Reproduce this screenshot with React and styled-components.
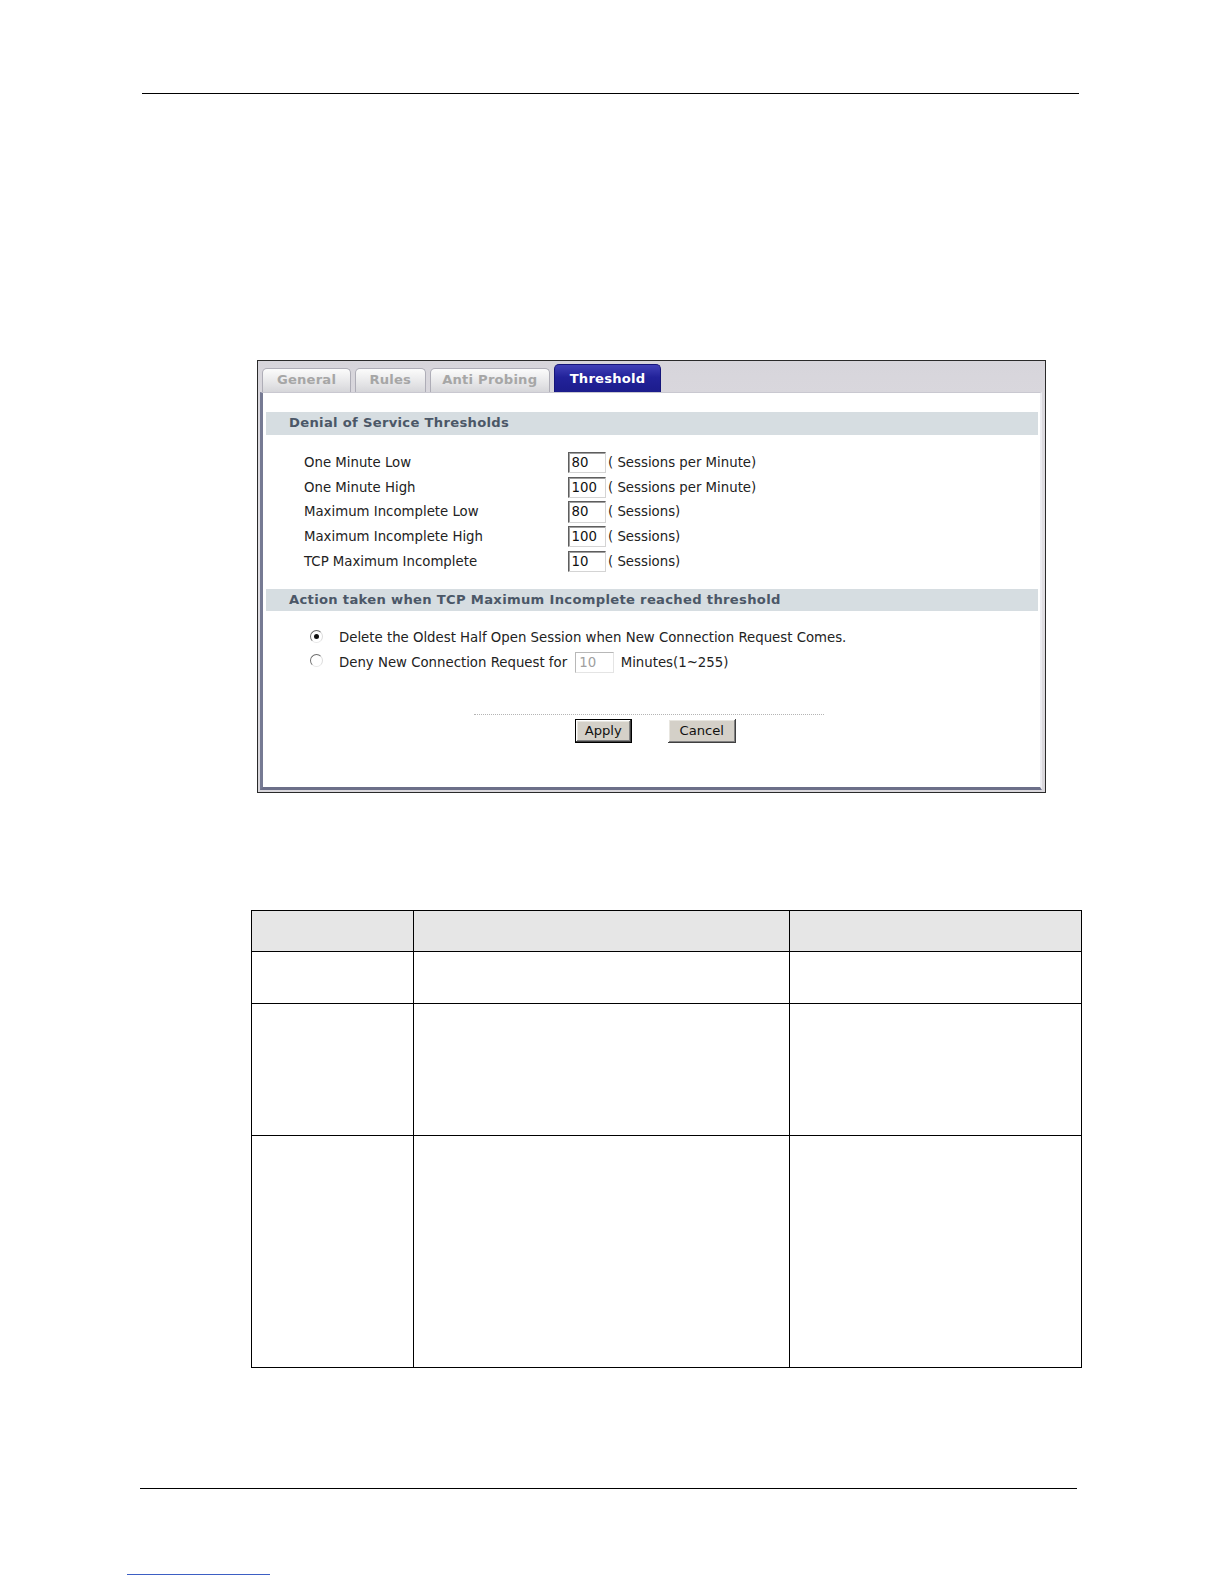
import React from "react";
import styled, { createGlobalStyle } from "styled-components";

const GlobalStyle = createGlobalStyle`
  html, body {
    margin: 0;
    padding: 0;
    background: #ffffff;
  }
  body {
    font-family: "DejaVu Sans", Verdana, sans-serif;
  }
`;

const Page = styled.div`
  width: 1224px;
  min-height: 1584px;
  box-sizing: border-box;
  padding-top: 93px;
  background: #fff;
  display: flex;
  flex-direction: column;
`;

const Rule = styled.div`
  margin-left: ${(p) => p.$left}px;
  margin-top: ${(p) => p.$top || 0}px;
  width: ${(p) => p.$width}px;
  height: 0;
  border-top: ${(p) => p.$weight || 1.5}px solid ${(p) => p.$color || "#000"};
`;

// ---------- screenshot panel ----------

const Panel = styled.div`
  margin-top: 266px;
  margin-left: 257px;
  width: 789px;
  height: 432.5px;
  box-sizing: border-box;
  border: 1px solid #2a2a2a;
  background: linear-gradient(#d7d5db 0%, #e2e0e5 40%, #d9d7dc 100%);
  padding: 3px 3px 2px 2px;
  display: flex;
  flex-direction: column;
`;

const TabStrip = styled.div`
  height: 28.3px;
  display: flex;
  align-items: flex-end;
  gap: 4px;
  padding-left: 2px;
`;

const Tab = styled.div`
  width: ${(p) => p.$width}px;
  height: ${(p) => (p.$active ? 28.3 : 24.3)}px;
  box-sizing: border-box;
  display: flex;
  align-items: center;
  justify-content: center;
  border-radius: 5px 5px 0 0;
  font-size: 13.15px;
  font-weight: bold;
  letter-spacing: 0.2px;
  border: 1px solid ${(p) => (p.$active ? "#15157a" : "#aeadb7")};
  border-bottom: none;
  color: ${(p) => (p.$active ? "#ffffff" : "#a6a6a6")};
  background: ${(p) =>
    p.$active
      ? "linear-gradient(#4141b8, #22229a 45%, #1c1c8c)"
      : "linear-gradient(#fbfbfb, #e6e6e8 60%, #d6d6da)"};
  padding-bottom: ${(p) => (p.$active ? 1 : 3)}px;
`;

const Content = styled.div`
  flex: 1;
  background: #ffffff;
  border-top: 1px solid #c9c8d0;
  border-left: 3px solid #767a93;
  border-bottom: 3px solid #6c6f89;
  border-right: 2px solid #ececf1;
  display: flex;
  flex-direction: column;
`;

const SectionBar = styled.div`
  margin: ${(p) => p.$top}px 2px 0 3px;
  height: 22.3px;
  line-height: 22.3px;
  background: #d6dde1;
  color: #4b5767;
  font-size: 13.15px;
  font-weight: bold;
  letter-spacing: 0.3px;
  padding-left: 23px;
`;

const FieldList = styled.div`
  margin-top: 15.2px;
  padding-left: 41px;
  display: flex;
  flex-direction: column;
`;

const FieldRow = styled.div`
  height: 24.8px;
  display: flex;
  align-items: center;
  font-size: 13.3px;
  color: #222;
`;

const FieldLabel = styled.span`
  width: 263.5px;
  flex: none;
`;

const TextBox = styled.input`
  width: ${(p) => p.$width || 38.5}px;
  height: 21.2px;
  box-sizing: border-box;
  margin: 0;
  padding: 0 0 0 3px;
  font: 13.3px "DejaVu Sans", Verdana, sans-serif;
  color: ${(p) => (p.disabled ? "#a0a0a0" : "#111")};
  background: #fff;
  border: 1px solid;
  border-color: ${(p) =>
    p.disabled ? "#b8b8b8 #e4e4e4 #e4e4e4 #b8b8b8" : "#5e5e5e #d4d4d4 #d4d4d4 #5e5e5e"};
  box-shadow: ${(p) => (p.disabled ? "none" : "inset 1px 1px 0 #a0a0a0")};
  outline: none;
`;

const Suffix = styled.span`
  margin-left: ${(p) => p.$gap || 2}px;
`;

const RadioList = styled.div`
  margin-top: 14px;
  padding-left: 47px;
  display: flex;
  flex-direction: column;
`;

const RadioRow = styled.div`
  height: 25.3px;
  display: flex;
  align-items: center;
  font-size: 13.3px;
  color: #222;
`;

const Radio = styled.span`
  width: 13px;
  height: 13px;
  flex: none;
  box-sizing: border-box;
  border-radius: 50%;
  border: 1px solid;
  border-color: #6e6e6e #dcdcdc #e8e8e8 #6e6e6e;
  background: #fff;
  margin-right: 16px;
  position: relative;
  top: ${(p) => (p.$checked ? -1 : -2)}px;
  display: flex;
  align-items: center;
  justify-content: center;
  &::after {
    content: "";
    width: 5px;
    height: 5px;
    border-radius: 50%;
    background: ${(p) => (p.$checked ? "#111" : "transparent")};
  }
`;

const Dotted = styled.div`
  margin-top: 38px;
  margin-left: 211px;
  width: 350px;
  border-top: 1px dotted #b4b4b4;
`;

const ButtonRow = styled.div`
  margin-top: 4px;
  padding-left: 312px;
  display: flex;
  gap: 36px;
`;

const Button = styled.button`
  width: ${(p) => p.$width}px;
  height: 24.3px;
  margin: 0;
  padding: 0;
  font: 13.15px "DejaVu Sans", Verdana, sans-serif;
  color: #111;
  background: #d4d0c8;
  border: ${(p) => (p.$default ? "1px solid #000" : "none")};
  box-shadow: inset -1px -1px 0 #404040, inset 1px 1px 0 #ffffff,
    inset -2px -2px 0 #808080, inset 2px 2px 0 #e8e6e0;
`;

// ---------- document table ----------

const Table = styled.table`
  margin-top: 117.5px;
  margin-left: 251px;
  width: 830px;
  border-collapse: collapse;
  table-layout: fixed;
  td,
  th {
    border: 1.5px solid #000;
    padding: 0;
  }
  th {
    background: #e6e6e6;
  }
`;

const Row = styled.tr`
  height: ${(p) => p.$height}px;
`;

const tabs = [
  { label: "General", width: 89 },
  { label: "Rules", width: 70.5 },
  { label: "Anti Probing", width: 120.5 },
  { label: "Threshold", width: 107, active: true },
];

const fields = [
  { label: "One Minute Low", value: "80", unit: "( Sessions per Minute)" },
  { label: "One Minute High", value: "100", unit: "( Sessions per Minute)" },
  { label: "Maximum Incomplete Low", value: "80", unit: "( Sessions)" },
  { label: "Maximum Incomplete High", value: "100", unit: "( Sessions)" },
  { label: "TCP Maximum Incomplete", value: "10", unit: "( Sessions)" },
];

function App() {
  return (
    <Page>
      <GlobalStyle />
      <Rule $left={141.5} $width={937} />

      <Panel>
        <TabStrip>
          {tabs.map((t) => (
            <Tab key={t.label} $width={t.width} $active={t.active}>
              {t.label}
            </Tab>
          ))}
        </TabStrip>

        <Content>
          <SectionBar $top={19.2}>Denial of Service Thresholds</SectionBar>
          <FieldList>
            {fields.map((f) => (
              <FieldRow key={f.label}>
                <FieldLabel>{f.label}</FieldLabel>
                <TextBox defaultValue={f.value} readOnly />
                <Suffix>{f.unit}</Suffix>
              </FieldRow>
            ))}
          </FieldList>

          <SectionBar $top={14.7}>
            Action taken when TCP Maximum Incomplete reached threshold
          </SectionBar>
          <RadioList>
            <RadioRow>
              <Radio $checked />
              Delete the Oldest Half Open Session when New Connection Request Comes.
            </RadioRow>
            <RadioRow>
              <Radio />
              Deny New Connection Request for
              <Suffix $gap={8}>
                <TextBox $width={38.5} defaultValue="10" disabled />
              </Suffix>
              <Suffix $gap={7}>Minutes(1~255)</Suffix>
            </RadioRow>
          </RadioList>

          <Dotted />
          <ButtonRow>
            <Button $width={56.5} $default>
              Apply
            </Button>
            <Button $width={68.5}>Cancel</Button>
          </ButtonRow>
        </Content>
      </Panel>

      <Table>
        <colgroup>
          <col style={{ width: 161.5 }} />
          <col style={{ width: 376.5 }} />
          <col style={{ width: 292 }} />
        </colgroup>
        <thead>
          <Row $height={40.5}>
            <th />
            <th />
            <th />
          </Row>
        </thead>
        <tbody>
          <Row $height={52.5}>
            <td />
            <td />
            <td />
          </Row>
          <Row $height={131.5}>
            <td />
            <td />
            <td />
          </Row>
          <Row $height={232}>
            <td />
            <td />
            <td />
          </Row>
        </tbody>
      </Table>

      <Rule $left={139.5} $width={937} $top={120.5} />
      <Rule $left={126.5} $width={143.5} $top={85} $weight={1} $color="#3d5fc4" />
    </Page>
  );
}

export default App;
